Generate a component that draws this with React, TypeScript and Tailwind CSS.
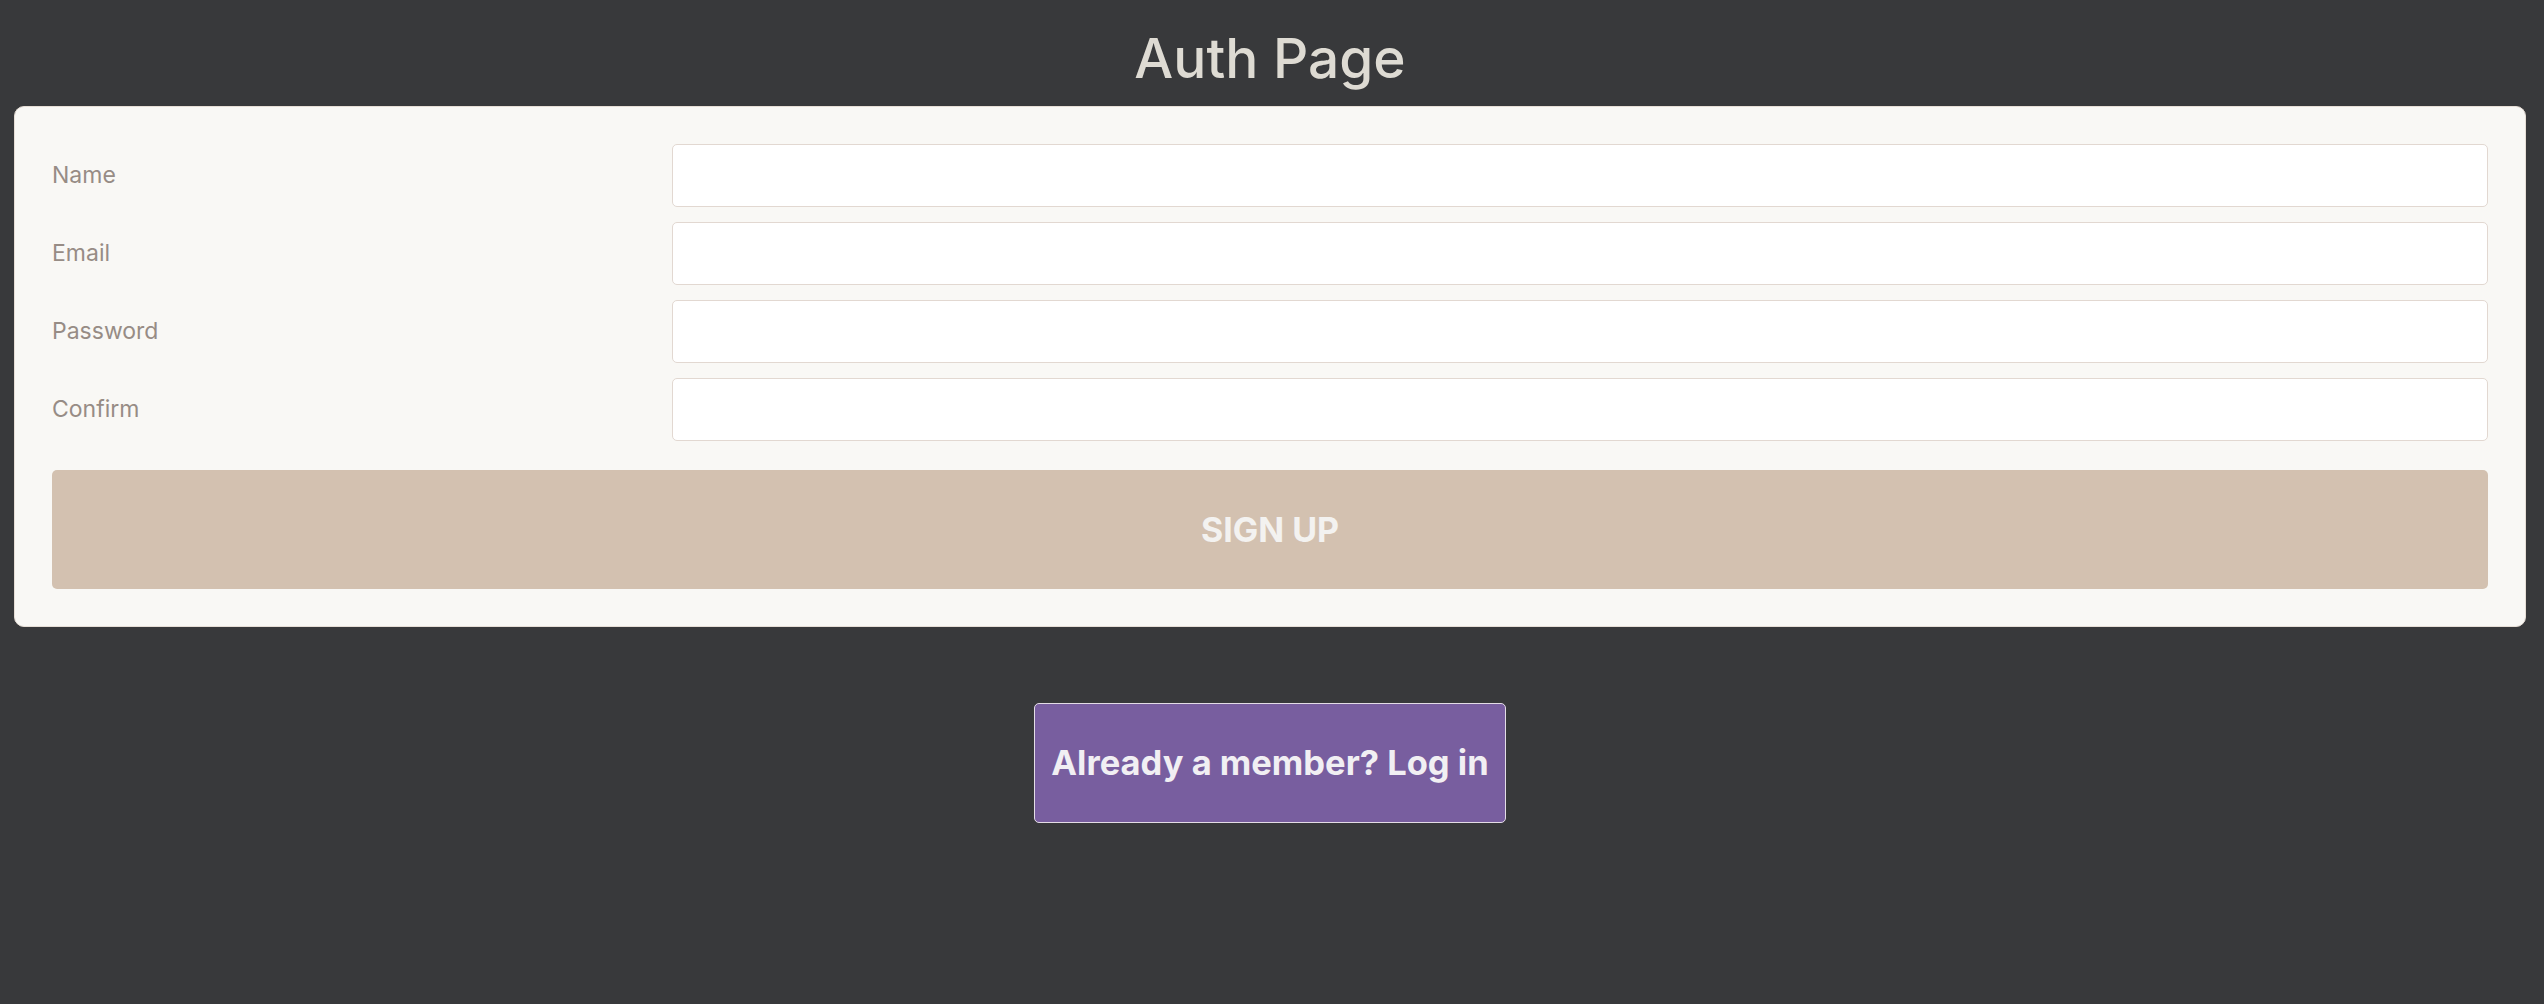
import { useState } from "react";

const fields = [
  { id: "name", label: "Name", type: "text" },
  { id: "email", label: "Email", type: "email" },
  { id: "password", label: "Password", type: "password" },
  { id: "confirm", label: "Confirm", type: "password" },
];

export default function App() {
  const [values, setValues] = useState<Record<string, string>>({});

  return (
    <div className="min-h-screen bg-[#38393b] pl-[14px] pr-[18px] font-['Inter','Noto_Sans',sans-serif]">
      <h1 className="pt-[24px] mb-[14px] text-center text-[55px] leading-[68px] font-medium text-[#dedbd3]">
        Auth Page
      </h1>

      <form
        className="bg-[#f9f8f5] border border-[#e6ded6] rounded-[10px] p-[37px]"
        onSubmit={(e) => e.preventDefault()}
      >
        <div className="flex flex-col gap-[15px]">
          {fields.map((f) => (
            <div key={f.id} className="grid grid-cols-[620px_1fr] items-center">
              <label htmlFor={f.id} className="text-[23px] text-[#978c85]">
                {f.label}
              </label>
              <input
                id={f.id}
                type={f.type}
                value={values[f.id] ?? ""}
                onChange={(e) => setValues({ ...values, [f.id]: e.target.value })}
                className="h-[63px] bg-white border border-[#e2d8d1] rounded-[5px] px-4 text-[22px] outline-none"
              />
            </div>
          ))}
        </div>

        <button
          type="submit"
          className="mt-[29px] w-full h-[119px] bg-[#d3c1b0] rounded-[5px] text-[34px] font-bold text-[#f3f2f0]"
        >
          SIGN UP
        </button>
      </form>

      <div className="flex justify-center mt-[76px]">
        <button className="h-[120px] px-[16px] bg-[#785e9f] border border-[#e4dde6] rounded-[5px] text-[34.5px] font-bold text-[#f1eff3]">
          Already a member? Log in
        </button>
      </div>
    </div>
  );
}
